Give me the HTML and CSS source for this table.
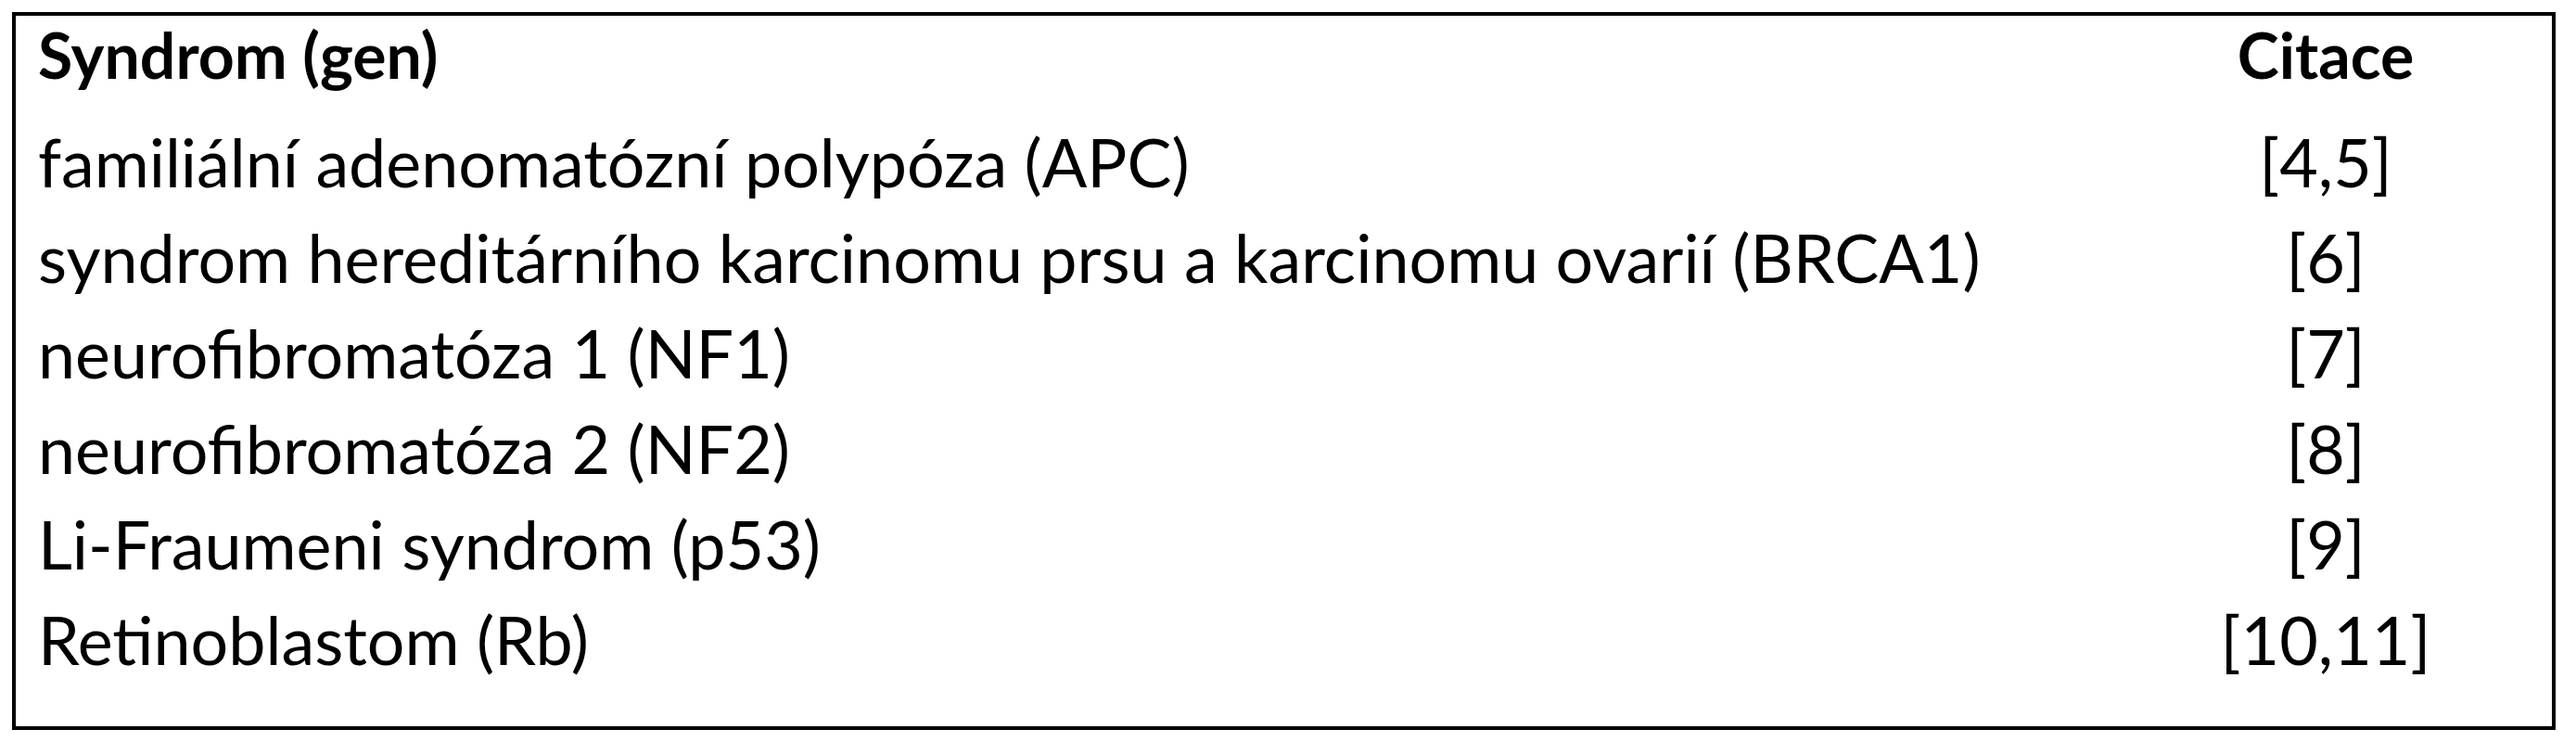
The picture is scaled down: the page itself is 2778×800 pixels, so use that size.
FILE: index.html
```html
<!DOCTYPE html>
<html lang="cs">
<head>
<meta charset="utf-8">
<title>Syndrom (gen) – Citace</title>
<link rel="stylesheet" href="styles.css">
</head>
<body>
<div class="frame">
  <div class="row head">
    <div class="name">Syndrom (gen)</div>
    <div class="cite">Citace</div>
  </div>
  <div class="row">
    <div class="name">familiální adenomatózní polypóza (APC)</div>
    <div class="cite">[4,5]</div>
  </div>
  <div class="row">
    <div class="name">syndrom hereditárního karcinomu prsu a karcinomu ovarií (BRCA1)</div>
    <div class="cite">[6]</div>
  </div>
  <div class="row">
    <div class="name">neurofibromatóza 1 (NF1)</div>
    <div class="cite">[7]</div>
  </div>
  <div class="row">
    <div class="name">neurofibromatóza 2 (NF2)</div>
    <div class="cite">[8]</div>
  </div>
  <div class="row">
    <div class="name">Li-Fraumeni syndrom (p53)</div>
    <div class="cite">[9]</div>
  </div>
  <div class="row">
    <div class="name">Retinoblastom (Rb)</div>
    <div class="cite">[10,11]</div>
  </div>
</div>
</body>
</html>
```
FILE: styles.css
```css
html, body {
  margin: 0;
  padding: 0;
  background: #ffffff;
}

body {
  padding: 13px;
  font-family: Lato, "Liberation Sans", sans-serif;
  color: #000000;
}

.frame {
  box-sizing: border-box;
  width: 2743px;
  height: 774px;
  border: 4px solid #000000;
  padding: 2px 0 0 24px;
}

.row {
  display: grid;
  grid-template-columns: 1fr 488px;
  font-size: 71.8px;
  line-height: 103px;
  white-space: nowrap;
}

.row.head {
  font-size: 68px;
  font-weight: 700;
  line-height: 80px;
  margin-bottom: 24px;
}

.cite {
  text-align: center;
}
```
